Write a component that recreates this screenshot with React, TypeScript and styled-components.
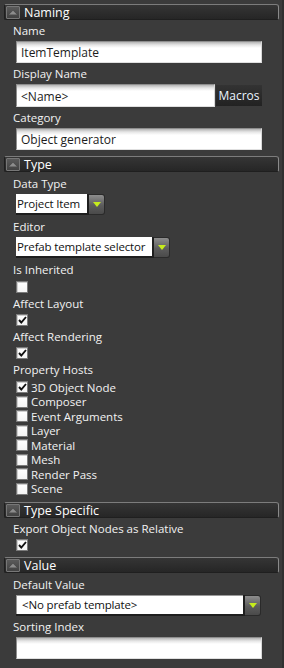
import React from 'react';
import styled, { createGlobalStyle } from 'styled-components';

const GlobalStyle = createGlobalStyle`
  html, body {
    margin: 0;
    padding: 0;
    background: #3b3b3b;
  }
  * { box-sizing: border-box; }
`;

const Panel = styled.div`
  width: 284px;
  height: 668px;
  background: #3b3b3b;
  border-right: 2px solid #303030;
  padding: 4px 3px 0 4px;
  font-family: "Open Sans", "Noto Sans", sans-serif;
  font-size: 11.5px;
  color: #f2f2f2;
  overflow: hidden;
`;

const Section = styled.section<{ gapAfter?: number }>`
  margin-bottom: ${({ gapAfter }) => gapAfter ?? 6}px;
`;

const Header = styled.div`
  height: 16px;
  display: flex;
  align-items: center;
  gap: 4px;
  padding-left: 1px;
  background: linear-gradient(#353535, #262626);
  border: 1px solid #1f1f1f;
  border-top-color: #7c7c7c;
  border-right-color: #8a8a8a;
  border-radius: 2px 3px 2px 2px;
  font-size: 12.5px;
  color: #fff;
`;

const CollapseButton = styled.span`
  width: 14px;
  height: 13px;
  display: flex;
  align-items: center;
  justify-content: center;
  background: linear-gradient(#5a5a5a, #424242);
  border: 1px solid #777;
  border-radius: 1px;
`;

const Body = styled.div`
  padding-left: 9px;
`;

const Label = styled.div<{ h?: number }>`
  height: ${({ h }) => h ?? 21}px;
  display: flex;
  align-items: center;
  white-space: nowrap;
`;

const FieldRow = styled.div`
  display: flex;
  align-items: stretch;
  gap: 1px;
  padding-left: 3px;
`;

const TextBox = styled.div<{ w?: number; h?: number }>`
  width: ${({ w }) => w ?? 246}px;
  height: ${({ h }) => h ?? 22}px;
  display: flex;
  align-items: center;
  padding: 1px 0 0 4px;
  background: linear-gradient(#b4b4b4 0, #e6e6e6 3px, #fff 6px);
  border: 1px solid #8e8e8e;
  border-right-color: #d8d8d8;
  border-bottom-color: #e0e0e0;
  color: #1c1c1c;
  font-size: 12px;
`;

const MacrosButton = styled.div`
  width: 46px;
  height: 21px;
  margin-top: 1px;
  display: flex;
  align-items: center;
  justify-content: center;
  background: linear-gradient(#333, #222);
  color: #eaf4ff;
  font-size: 12px;
`;

const Dropdown = styled.div<{ w: number }>`
  width: ${({ w }) => w}px;
  height: 21px;
  display: flex;
`;

const DropField = styled.div<{ inset?: boolean }>`
  flex: 1;
  display: flex;
  align-items: center;
  padding-left: ${({ inset }) => (inset ? 6 : 1)}px;
  background: #fff;
  border-right: 2px solid #1e1e1e;
  border-bottom: 2px solid #1e1e1e;
  box-shadow: ${({ inset }) => (inset ? 'inset 1px 1px 0 #9a9a9a' : 'none')};
  color: #111;
  font-size: 11.5px;
  letter-spacing: -0.15px;
  white-space: nowrap;
  overflow: hidden;
`;

const DropButton = styled.div`
  width: 16px;
  display: flex;
  align-items: center;
  justify-content: center;
  background: linear-gradient(#8e8e8e, #5c5c5c 55%, #4a4a4a);
  border: 1px solid #2a2a2a;
  border-left: none;
  border-radius: 0 3px 3px 0;
`;

const Check = styled.div`
  width: 12px;
  height: 12px;
  flex: none;
  display: flex;
  align-items: center;
  justify-content: center;
  background: linear-gradient(#fff, #f4f4f4);
  border: 1px solid #7a7a7a;
  box-shadow: inset 1px 1px 0 #cfcfcf;
`;

const CheckOnly = styled.div`
  padding-left: 3px;
  height: 12px;
  display: flex;
`;

const HostList = styled.div`
  padding-left: 3px;
  display: flex;
  flex-direction: column;
`;

const HostRow = styled.div`
  height: 14.5px;
  display: flex;
  align-items: center;
  gap: 3px;
  white-space: nowrap;
`;

const Chevron = () => (
  <svg width="8" height="5" viewBox="0 0 8 5">
    <path d="M0.5 4.5 L4 1 L7.5 4.5" fill="#8d8d8d" stroke="#8d8d8d" strokeWidth="0.6" />
  </svg>
);

const Arrow = () => (
  <svg width="8" height="5" viewBox="0 0 8 5">
    <path d="M0 0 H8 L4 5 Z" fill="#c6ec1c" />
  </svg>
);

const Tick = () => (
  <svg width="9" height="8" viewBox="0 0 9 8">
    <path d="M1 4 L3.3 6.5 L8 1" fill="none" stroke="#111" strokeWidth="1.9" />
  </svg>
);

const CheckBox = ({ checked }: { checked?: boolean }) => <Check>{checked && <Tick />}</Check>;

const SectionHeader = ({ title }: { title: string }) => (
  <Header>
    <CollapseButton>
      <Chevron />
    </CollapseButton>
    {title}
  </Header>
);

const hosts: [string, boolean][] = [
  ['3D Object Node', true],
  ['Composer', false],
  ['Event Arguments', false],
  ['Layer', false],
  ['Material', false],
  ['Mesh', false],
  ['Render Pass', false],
  ['Scene', false],
];

export default function App() {
  return (
    <>
      <GlobalStyle />
      <Panel>
        <Section gapAfter={6}>
          <SectionHeader title="Naming" />
          <Body>
            <Label>Name</Label>
            <FieldRow>
              <TextBox>ItemTemplate</TextBox>
            </FieldRow>
            <Label>Display Name</Label>
            <FieldRow>
              <TextBox w={199} h={23}>&lt;Name&gt;</TextBox>
              <MacrosButton>Macros</MacrosButton>
            </FieldRow>
            <Label>Category</Label>
            <FieldRow>
              <TextBox>Object generator</TextBox>
            </FieldRow>
          </Body>
        </Section>

        <Section gapAfter={6}>
          <SectionHeader title="Type" />
          <Body>
            <Label h={22}>Data Type</Label>
            <FieldRow>
              <Dropdown w={89}>
                <DropField>Project Item</DropField>
                <DropButton>
                  <Arrow />
                </DropButton>
              </Dropdown>
            </FieldRow>
            <Label h={22}>Editor</Label>
            <FieldRow>
              <Dropdown w={154}>
                <DropField>Prefab template selector</DropField>
                <DropButton>
                  <Arrow />
                </DropButton>
              </Dropdown>
            </FieldRow>
            <Label h={23}>Is Inherited</Label>
            <CheckOnly>
              <CheckBox />
            </CheckOnly>
            <Label>Affect Layout</Label>
            <CheckOnly>
              <CheckBox checked />
            </CheckOnly>
            <Label>Affect Rendering</Label>
            <CheckOnly>
              <CheckBox checked />
            </CheckOnly>
            <Label>Property Hosts</Label>
            <HostList>
              {hosts.map(([name, on]) => (
                <HostRow key={name}>
                  <CheckBox checked={on} />
                  {name}
                </HostRow>
              ))}
            </HostList>
          </Body>
        </Section>

        <Section gapAfter={6}>
          <SectionHeader title="Type Specific" />
          <Body>
            <Label>Export Object Nodes as Relative</Label>
            <CheckOnly>
              <CheckBox checked />
            </CheckOnly>
          </Body>
        </Section>

        <Section>
          <SectionHeader title="Value" />
          <Body>
            <Label h={22}>Default Value</Label>
            <FieldRow>
              <Dropdown w={245}>
                <DropField inset>&lt;No prefab template&gt;</DropField>
                <DropButton>
                  <Arrow />
                </DropButton>
              </Dropdown>
            </FieldRow>
            <Label>Sorting Index</Label>
            <FieldRow>
              <TextBox />
            </FieldRow>
          </Body>
        </Section>
      </Panel>
    </>
  );
}
